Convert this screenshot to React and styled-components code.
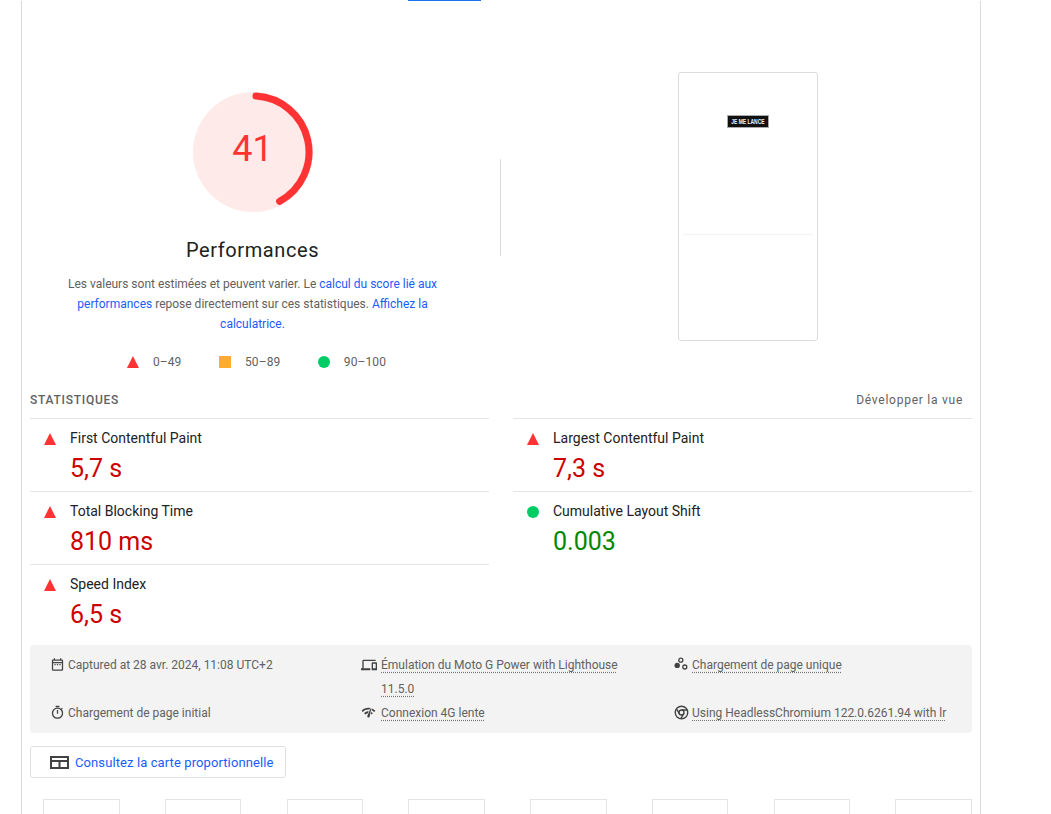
import React from "react";
import styled, { createGlobalStyle } from "styled-components";

const GlobalStyle = createGlobalStyle`
	html, body {
		margin: 0;
		height: 814px;
		overflow: hidden;
		background: #fff;
	}
	body {
		font-family: Roboto, "Liberation Sans", sans-serif;
		color: #212121;
	}
`;

const colors = { fail: "#ff3333", average: "#ffaa33", pass: "#00cc66" };
const linkBlue = "#1a5cff";

const TabStrip = styled.div`
	height: 1px;
	padding-left: 408px;
`;
const TabIndicator = styled.div`
	width: 73px;
	height: 1px;
	background: #1a73e8;
`;
const Frame = styled.main`
	margin-left: 21px;
	width: 958px;
	height: 813px;
	border: solid #d9d9d9;
	border-width: 0 1px;
	overflow: hidden;
`;
const TopRow = styled.section`
	display: grid;
	grid-template-columns: 461px 18px 1fr;
	height: 379px;
`;
const ScoreColumn = styled.div`
	display: flex;
	flex-direction: column;
	align-items: center;
	padding-top: 91px;
`;
const Gauge = styled.div`
	position: relative;
	width: 120px;
	height: 120px;
`;
const GaugeValue = styled.div`
	position: absolute;
	inset: 0;
	display: flex;
	align-items: center;
	justify-content: center;
	padding-bottom: 6px;
	box-sizing: border-box;
	font-size: 36px;
	color: ${colors.fail};
`;
const ScoreTitle = styled.h1`
	margin: 24px 0 0;
	font-size: 20px;
	font-weight: 400;
	line-height: 28px;
	letter-spacing: 0.6px;
	color: #212121;
`;
const Description = styled.p`
	margin: 10px 0 0;
	width: 390px;
	font-size: 12px;
	line-height: 20px;
	text-align: center;
	color: #616161;
`;
const InlineLink = styled.a`
	color: ${linkBlue};
	text-decoration: none;
`;
const Legend = styled.div`
	display: flex;
	align-items: center;
	gap: 37.5px;
	margin: 18px 0 0 8px;
	line-height: 20px;
	font-size: 12px;
	letter-spacing: 0.1px;
	color: #616161;
`;
const LegendItem = styled.span`
	display: flex;
	align-items: center;
	gap: 14px;
`;
const Rating = styled.span`
	flex: none;
	display: block;
	width: 12px;
	height: 12px;
	background: ${(p) => colors[p.$level]};
	border-radius: ${(p) => (p.$level === "pass" ? "50%" : "0")};
	clip-path: ${(p) =>
		p.$level === "fail" ? "polygon(50% 0, 100% 100%, 0 100%)" : "none"};
`;
const VerticalRule = styled.div`
	width: 1px;
	height: 97px;
	margin: 158px 0 0 17px;
	background: #d9d9d9;
`;
const ShotColumn = styled.div`
	display: flex;
	justify-content: center;
	padding: 71px 0 0 15px;
`;
const ShotFrame = styled.div`
	box-sizing: border-box;
	width: 140px;
	height: 269px;
	padding-top: 42px;
	display: flex;
	flex-direction: column;
	align-items: center;
	border: 1px solid #dcdcdc;
	border-radius: 3px;
`;
const ShotLogo = styled.div`
	box-sizing: border-box;
	display: flex;
	justify-content: center;
	width: 42px;
	height: 13px;
	margin-bottom: 106px;
	border: 1px solid #aaa;
	background: #111;
	color: #f2f2f2;
	font-family: "Liberation Sans", sans-serif;
	font-size: 8px;
	font-weight: 700;
	line-height: 11px;
	white-space: nowrap;
`;
const ShotLogoText = styled.span`
	flex: none;
	transform: scaleX(0.62);
`;
const ShotRule = styled.div`
	width: 130px;
	height: 1px;
	background: #f3f3f3;
`;
const Body = styled.div`
	padding: 0 8px;
`;
const MetricsHeader = styled.header`
	display: flex;
	justify-content: space-between;
	align-items: center;
	height: 38px;
	padding: 2px 9px 0 0;
	box-sizing: border-box;
	font-size: 12px;
	letter-spacing: 0.75px;
	color: #616161;
`;
const MetricsTitle = styled.h2`
	margin: 0;
	font-size: 12px;
	font-weight: 500;
	letter-spacing: 0.75px;
	text-transform: uppercase;
`;
const MetricsGrid = styled.div`
	display: grid;
	grid-template-columns: 459px 459px;
	column-gap: 24px;
`;
const Metric = styled.article`
	box-sizing: border-box;
	height: 73px;
	display: grid;
	grid-template-columns: 12px 1fr;
	column-gap: 14px;
	padding: 9px 0 0 14px;
	border-top: 1px solid #e5e5e5;
`;
const MetricIcon = styled.div`
	padding-top: 5px;
`;
const MetricLabel = styled.div`
	font-size: 14px;
	line-height: 20px;
	color: #212121;
`;
const MetricValue = styled.div`
	padding-top: 1px;
	font-size: 25px;
	line-height: 39px;
	color: ${(p) => (p.$pass ? "#008800" : "#cc0000")};
`;
const EnvPanel = styled.section`
	display: grid;
	grid-template-columns: 311px 313px 1fr;
	margin-top: 8px;
	padding: 8px 0 8px 20px;
	background: #f3f3f3;
	border-radius: 4px;
`;
const EnvItem = styled.div`
	display: grid;
	grid-template-columns: ${(p) => (p.$wide ? "20px" : "18px")} 1fr;
	padding-right: ${(p) => (p.$wide ? "24px" : "0")};
	font-size: 12px;
	line-height: 24px;
	color: #616161;
`;
const EnvIcon = styled.svg`
	width: ${(p) => p.$size || 14}px;
	height: ${(p) => p.$size || 14}px;
	margin-top: 4px;
	fill: #424242;
`;
const EnvText = styled.span`
	text-decoration: ${(p) => (p.$plain ? "none" : "underline dotted #757575")};
	text-underline-offset: 3px;
	white-space: ${(p) => (p.$nowrap ? "nowrap" : "normal")};
`;
const TreemapButton = styled.a`
	box-sizing: border-box;
	display: flex;
	align-items: center;
	gap: 6px;
	width: 256px;
	height: 32px;
	margin-top: 13px;
	padding-left: 19px;
	border: 1px solid #e0e0e0;
	border-radius: 3px;
	background: #fff;
	color: ${linkBlue};
	font-size: 13px;
	letter-spacing: 0.1px;
	white-space: nowrap;
`;
const FilmStrip = styled.div`
	display: flex;
	justify-content: space-between;
	margin-top: 21px;
	padding: 0 0.25px 0 13px;
`;
const Thumb = styled.div`
	box-sizing: border-box;
	width: 76.5px;
	height: 135px;
	border: 1px solid #e4e4e4;
`;

const GaugeArc = () => (
	<svg width="120" height="120" viewBox="0 0 120 120">
		<circle cx="60" cy="60" r="60" fill="#ff3333" fillOpacity="0.1" />
		<path
			d="M63 4.1 A56 56 0 0 1 86.6 109.3"
			fill="none"
			stroke={colors.fail}
			strokeWidth="7"
			strokeLinecap="round"
		/>
	</svg>
);

const DateIcon = () => (
	<EnvIcon viewBox="0 0 24 24" $size={15}>
		<path d="M7 11h2v2H7v-2zm14-5v14a2 2 0 0 1-2 2H5a2 2 0 0 1-2-2l.01-14c0-1.1.88-2 1.99-2h1V2h2v2h8V2h2v2h1a2 2 0 0 1 2 2zM5 8h14V6H5v2zm14 12V10H5v10h14zm-4-7h2v-2h-2v2zm-4 0h2v-2h-2v2z" />
	</EnvIcon>
);
const TimerIcon = () => (
	<EnvIcon viewBox="0 0 24 24" $size={15}>
		<path d="M15 1H9v2h6V1zm-4 13h2V8h-2v6zm8.03-6.61l1.42-1.42c-.43-.51-.9-.99-1.41-1.41l-1.42 1.42C16.07 4.74 14.12 4 12 4c-4.97 0-9 4.03-9 9s4.02 9 9 9 9-4.03 9-9c0-2.12-.74-4.07-1.97-5.61zM12 20c-3.87 0-7-3.13-7-7s3.13-7 7-7 7 3.13 7 7-3.13 7-7 7z" />
	</EnvIcon>
);
const DevicesIcon = () => (
	<EnvIcon viewBox="0 0 24 24" $size={16}>
		<path d="M4 6h18V4H4c-1.1 0-2 .9-2 2v11H0v3h14v-3H4V6zm19 2h-6c-.55 0-1 .45-1 1v10c0 .55.45 1 1 1h6c.55 0 1-.45 1-1V9c0-.55-.45-1-1-1zm-1 9h-4v-7h4v7z" />
	</EnvIcon>
);
const NetworkIcon = () => (
	<EnvIcon viewBox="0 0 24 24" $size={15}>
		<path d="M15.9 5c-.17 0-.32.09-.41.23l-.07.15-5.18 11.65c-.16.29-.26.61-.26.96 0 1.11.9 2.01 2.01 2.01.96 0 1.77-.68 1.96-1.59l.01-.03L16.4 5.5c0-.28-.22-.5-.5-.5zM1 9l2 2c2.88-2.88 6.79-4.08 10.53-3.62l1.19-2.68C9.89 3.84 4.74 5.27 1 9zm20 2l2-2c-1.64-1.64-3.55-2.82-5.59-3.57l-.53 2.82c1.5.62 2.9 1.53 4.12 2.75zm-4 4l2-2c-.8-.8-1.7-1.42-2.66-1.89l-.55 2.92c.42.27.83.59 1.21.97zM5 13l2 2c1.13-1.13 2.56-1.79 4.03-2l1.28-2.88c-2.63-.08-5.3.87-7.31 2.88z" />
	</EnvIcon>
);
const SamplesIcon = () => (
	<EnvIcon viewBox="0 0 14 14">
		<circle cx="3.2" cy="8.4" r="2.7" />
		<circle cx="6.8" cy="3.2" r="2" fill="none" stroke="#424242" strokeWidth="1.3" />
		<circle cx="10.8" cy="10" r="2" fill="none" stroke="#424242" strokeWidth="1.3" />
	</EnvIcon>
);
const ChromeIcon = () => (
	<EnvIcon viewBox="0 0 24 24" $size={15}>
		<g fill="none" stroke="#424242" strokeWidth="2.2">
			<circle cx="12" cy="12" r="10" />
			<circle cx="12" cy="12" r="4" />
			<path d="M12 8h9M8.5 14 4 6.2M15.5 14 11 21.8" />
		</g>
	</EnvIcon>
);
const TreemapIcon = () => (
	<svg width="19" height="13" viewBox="0 0 19 13">
		<path
			d="M1 1h17v11H1zM1 5h17M9.5 5v7"
			fill="none"
			stroke="#424242"
			strokeWidth="2"
		/>
	</svg>
);

const metrics = [
	{ label: "First Contentful Paint", value: "5,7 s", level: "fail" },
	{ label: "Largest Contentful Paint", value: "7,3 s", level: "fail" },
	{ label: "Total Blocking Time", value: "810 ms", level: "fail" },
	{ label: "Cumulative Layout Shift", value: "0.003", level: "pass" },
	{ label: "Speed Index", value: "6,5 s", level: "fail" },
];

const App = () => {
	return (
		<>
			<GlobalStyle />
			<TabStrip>
				<TabIndicator />
			</TabStrip>
			<Frame>
				<TopRow>
					<ScoreColumn>
						<Gauge>
							<GaugeArc />
							<GaugeValue>41</GaugeValue>
						</Gauge>
						<ScoreTitle>Performances</ScoreTitle>
						<Description>
							Les valeurs sont estimées et peuvent varier. Le{" "}
							<InlineLink>calcul du score lié aux performances</InlineLink>{" "}
							repose directement sur ces statistiques.{" "}
							<InlineLink>Affichez la calculatrice.</InlineLink>
						</Description>
						<Legend>
							<LegendItem>
								<Rating $level="fail" />
								0–49
							</LegendItem>
							<LegendItem>
								<Rating $level="average" />
								50–89
							</LegendItem>
							<LegendItem>
								<Rating $level="pass" />
								90–100
							</LegendItem>
						</Legend>
					</ScoreColumn>
					<VerticalRule />
					<ShotColumn>
						<ShotFrame>
							<ShotLogo>
								<ShotLogoText>JE ME LANCE</ShotLogoText>
							</ShotLogo>
							<ShotRule />
						</ShotFrame>
					</ShotColumn>
				</TopRow>
				<Body>
					<MetricsHeader>
						<MetricsTitle>Statistiques</MetricsTitle>
						<span>Développer la vue</span>
					</MetricsHeader>
					<MetricsGrid>
						{metrics.map((m) => (
							<Metric key={m.label}>
								<MetricIcon>
									<Rating $level={m.level} />
								</MetricIcon>
								<div>
									<MetricLabel>{m.label}</MetricLabel>
									<MetricValue $pass={m.level === "pass"}>{m.value}</MetricValue>
								</div>
							</Metric>
						))}
					</MetricsGrid>
					<EnvPanel>
						<EnvItem>
							<DateIcon />
							<EnvText $plain>Captured at 28 avr. 2024, 11:08 UTC+2</EnvText>
						</EnvItem>
						<EnvItem $wide>
							<DevicesIcon />
							<EnvText>Émulation du Moto G Power with Lighthouse 11.5.0</EnvText>
						</EnvItem>
						<EnvItem>
							<SamplesIcon />
							<EnvText $nowrap>Chargement de page unique</EnvText>
						</EnvItem>
						<EnvItem>
							<TimerIcon />
							<EnvText $plain>Chargement de page initial</EnvText>
						</EnvItem>
						<EnvItem $wide>
							<NetworkIcon />
							<EnvText>Connexion 4G lente</EnvText>
						</EnvItem>
						<EnvItem>
							<ChromeIcon />
							<EnvText $nowrap>Using HeadlessChromium 122.0.6261.94 with lr</EnvText>
						</EnvItem>
					</EnvPanel>
					<TreemapButton>
						<TreemapIcon />
						Consultez la carte proportionnelle
					</TreemapButton>
					<FilmStrip>
						{Array.from({ length: 8 }, (_, i) => (
							<Thumb key={i} />
						))}
					</FilmStrip>
				</Body>
			</Frame>
		</>
	);
};

export default App;
